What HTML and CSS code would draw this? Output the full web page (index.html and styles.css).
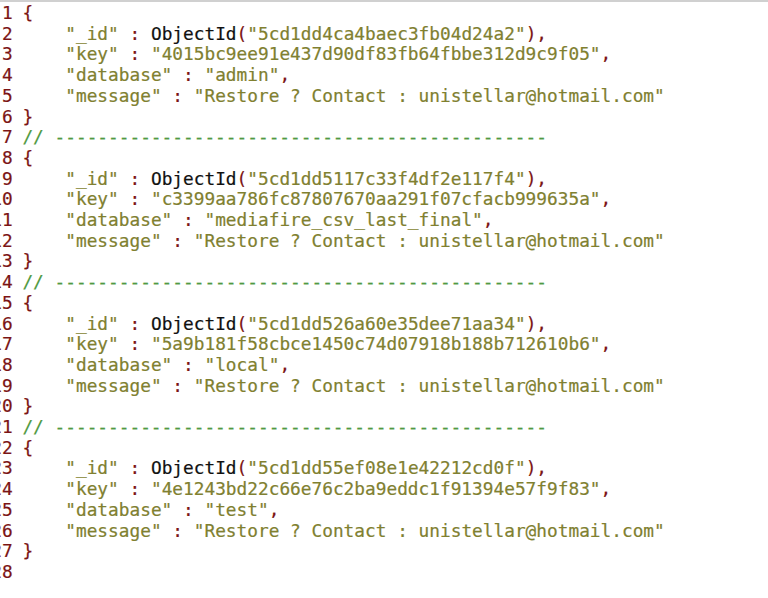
FILE: index.html
```html
<!DOCTYPE html>
<html>
<head>
<meta charset="utf-8">
<link rel="stylesheet" href="styles.css">
</head>
<body>
<div class="editor">
<div class="gutter"><span>1</span><span>2</span><span>3</span><span>4</span><span>5</span><span>6</span><span>7</span><span>8</span><span>9</span><span>10</span><span>11</span><span>12</span><span>13</span><span>14</span><span>15</span><span>16</span><span>17</span><span>18</span><span>19</span><span>20</span><span>21</span><span>22</span><span>23</span><span>24</span><span>25</span><span>26</span><span>27</span><span>28</span></div>
<pre class="code"><span class="p">{</span>
    <span class="s">"_id"</span> <span class="p">:</span> <span class="f">ObjectId</span><span class="p">(</span><span class="s">"5cd1dd4ca4baec3fb04d24a2"</span><span class="p">),</span>
    <span class="s">"key"</span> <span class="p">:</span> <span class="s">"4015bc9ee91e437d90df83fb64fbbe312d9c9f05"</span><span class="p">,</span>
    <span class="s">"database"</span> <span class="p">:</span> <span class="s">"admin"</span><span class="p">,</span>
    <span class="s">"message"</span> <span class="p">:</span> <span class="s">"Restore ? Contact : unistellar@hotmail.com"</span>
<span class="p">}</span>
<span class="c">// ----------------------------------------------</span>
<span class="p">{</span>
    <span class="s">"_id"</span> <span class="p">:</span> <span class="f">ObjectId</span><span class="p">(</span><span class="s">"5cd1dd5117c33f4df2e117f4"</span><span class="p">),</span>
    <span class="s">"key"</span> <span class="p">:</span> <span class="s">"c3399aa786fc87807670aa291f07cfacb999635a"</span><span class="p">,</span>
    <span class="s">"database"</span> <span class="p">:</span> <span class="s">"mediafire_csv_last_final"</span><span class="p">,</span>
    <span class="s">"message"</span> <span class="p">:</span> <span class="s">"Restore ? Contact : unistellar@hotmail.com"</span>
<span class="p">}</span>
<span class="c">// ----------------------------------------------</span>
<span class="p">{</span>
    <span class="s">"_id"</span> <span class="p">:</span> <span class="f">ObjectId</span><span class="p">(</span><span class="s">"5cd1dd526a60e35dee71aa34"</span><span class="p">),</span>
    <span class="s">"key"</span> <span class="p">:</span> <span class="s">"5a9b181f58cbce1450c74d07918b188b712610b6"</span><span class="p">,</span>
    <span class="s">"database"</span> <span class="p">:</span> <span class="s">"local"</span><span class="p">,</span>
    <span class="s">"message"</span> <span class="p">:</span> <span class="s">"Restore ? Contact : unistellar@hotmail.com"</span>
<span class="p">}</span>
<span class="c">// ----------------------------------------------</span>
<span class="p">{</span>
    <span class="s">"_id"</span> <span class="p">:</span> <span class="f">ObjectId</span><span class="p">(</span><span class="s">"5cd1dd55ef08e1e42212cd0f"</span><span class="p">),</span>
    <span class="s">"key"</span> <span class="p">:</span> <span class="s">"4e1243bd22c66e76c2ba9eddc1f91394e57f9f83"</span><span class="p">,</span>
    <span class="s">"database"</span> <span class="p">:</span> <span class="s">"test"</span><span class="p">,</span>
    <span class="s">"message"</span> <span class="p">:</span> <span class="s">"Restore ? Contact : unistellar@hotmail.com"</span>
<span class="p">}</span>
</pre>
</div>
</body>
</html>
```

FILE: styles.css
```css
html, body {
  margin: 0;
  padding: 0;
  background: #ffffff;
  overflow: hidden;
}
.editor {
  border-top: 2px solid #d0d0d0;
  padding-top: 1px;
  display: flex;
  font-family: "DejaVu Sans Mono", monospace;
  font-size: 17.8px;
  line-height: 20.7px;
  overflow: hidden;
  height: 595px;
  -webkit-text-stroke: 0.2px currentColor;
}
.gutter {
  display: flex;
  flex-direction: column;
  align-items: flex-end;
  width: 2ch;
  margin-left: calc(2px - 1ch);
  margin-right: calc(1ch - 1px);
  color: #7b1414;
  flex: none;
}
.code {
  margin: 0;
  font: inherit;
  color: #000;
  white-space: pre;
}
.p { color: #7b1414; }
.s { color: #808030; }
.f { color: #111111; }
.c { color: #4f9a42; }
```
